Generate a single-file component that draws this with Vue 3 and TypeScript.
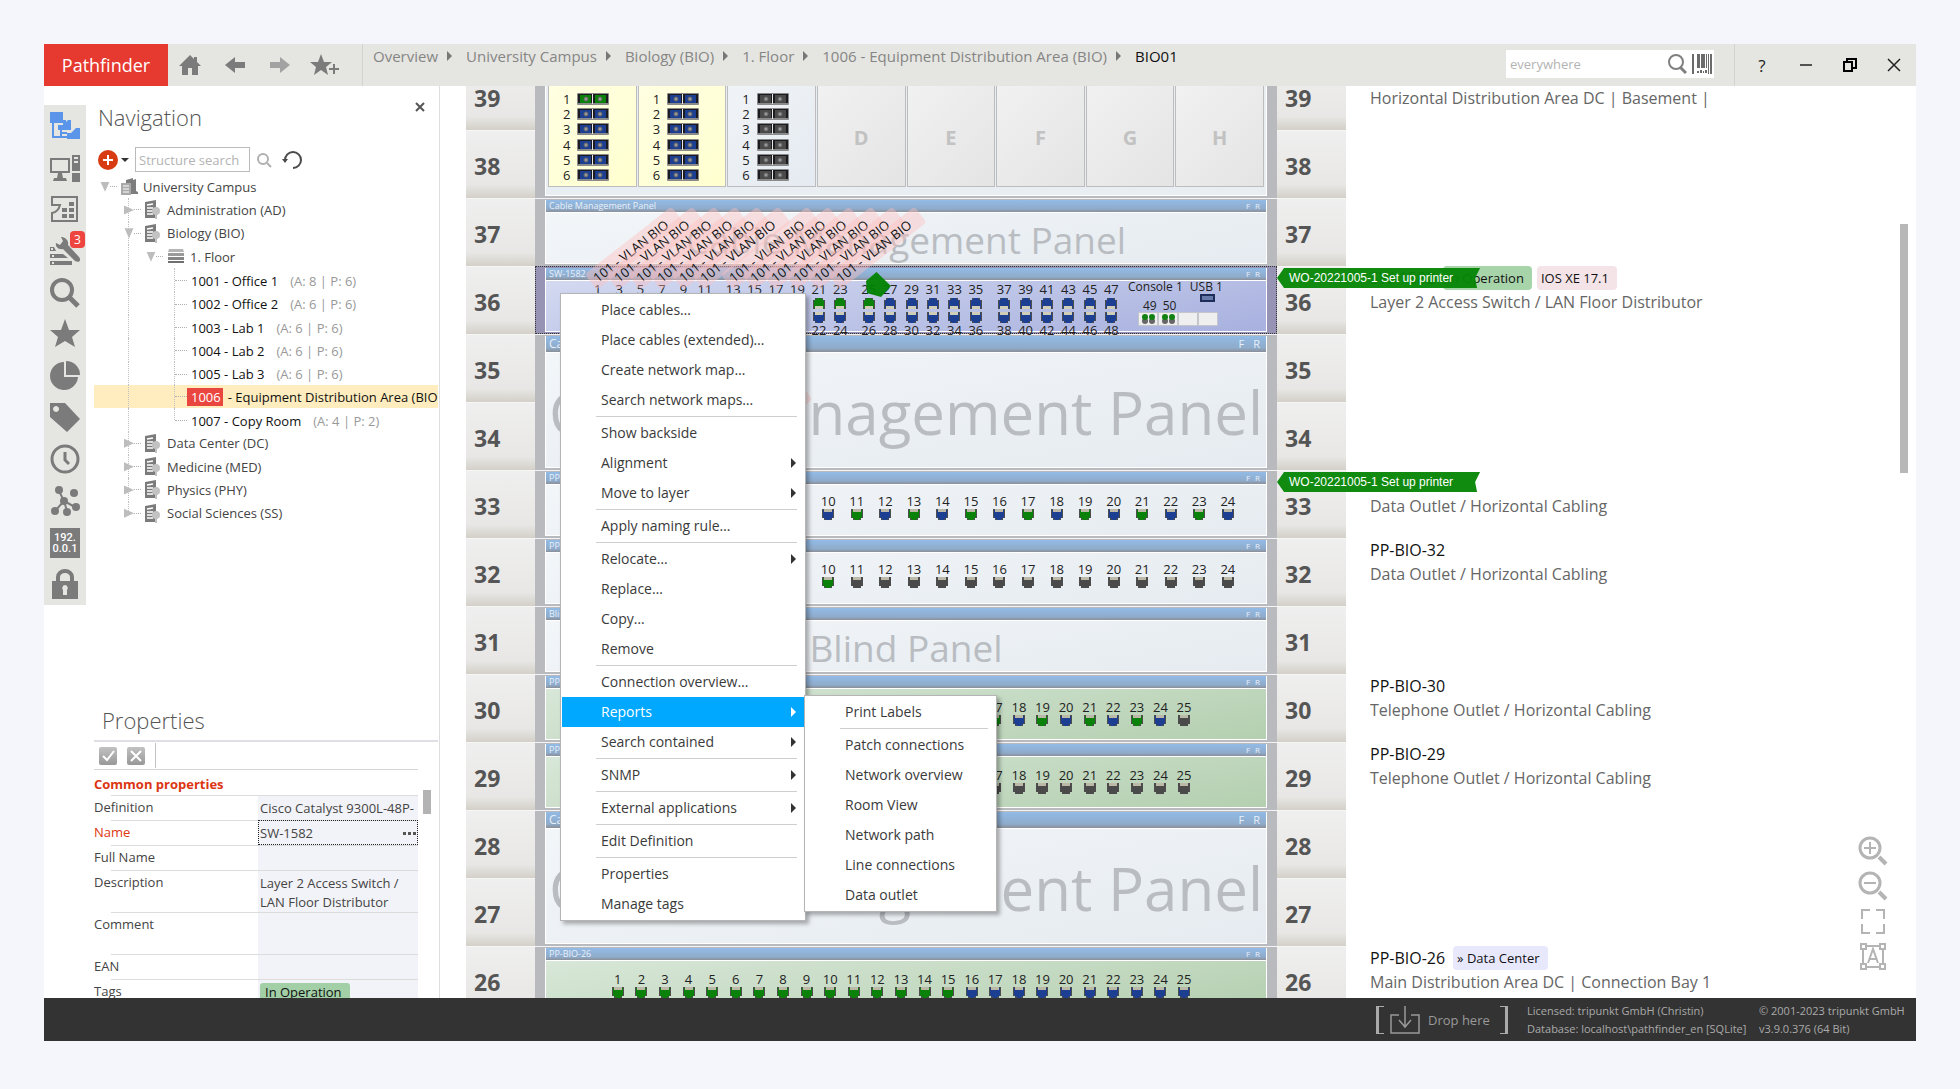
<script setup lang="ts">
interface TreeRow {
  label: string
  depth: number
  kind: 'campus' | 'building' | 'floor' | 'room'
  open?: boolean
  meta?: string
  code?: string
  last?: boolean
}
interface MenuEntry {
  label?: string
  sub?: boolean
  active?: boolean
  separator?: boolean
}
type Colour = 'green' | 'blue' | 'gray'
interface Port {
  n: number
  colour: Colour
}
interface Device {
  kind: 'blank' | 'switch' | 'patch' | 'phone'
  units: number
  title: string
  ports?: Port[]
}
interface UnitInfo {
  unit: number
  name?: string
  tags?: { text: string; tone: string }[]
  text?: string
  order?: string
}

const crumbs = ['Overview', 'University Campus', 'Biology (BIO)', '1. Floor', '1006 - Equipment Distribution Area (BIO)', 'BIO01']

const tree: TreeRow[] = [
  { label: 'University Campus', depth: 0, kind: 'campus', open: true },
  { label: 'Administration (AD)', depth: 1, kind: 'building' },
  { label: 'Biology (BIO)', depth: 1, kind: 'building', open: true },
  { label: '1. Floor', depth: 2, kind: 'floor', open: true },
  { label: '1001 - Office 1', depth: 3, kind: 'room', meta: '(A: 8 | P: 6)' },
  { label: '1002 - Office 2', depth: 3, kind: 'room', meta: '(A: 6 | P: 6)' },
  { label: '1003 - Lab 1', depth: 3, kind: 'room', meta: '(A: 6 | P: 6)' },
  { label: '1004 - Lab 2', depth: 3, kind: 'room', meta: '(A: 6 | P: 6)' },
  { label: '1005 - Lab 3', depth: 3, kind: 'room', meta: '(A: 6 | P: 6)' },
  { label: '- Equipment Distribution Area (BIO)', depth: 3, kind: 'room', code: '1006' },
  { label: '1007 - Copy Room', depth: 3, kind: 'room', meta: '(A: 4 | P: 2)', last: true },
  { label: 'Data Center (DC)', depth: 1, kind: 'building' },
  { label: 'Medicine (MED)', depth: 1, kind: 'building' },
  { label: 'Physics (PHY)', depth: 1, kind: 'building' },
  { label: 'Social Sciences (SS)', depth: 1, kind: 'building', last: true },
]

const sep: MenuEntry = { separator: true }
const menu: MenuEntry[] = [
  { label: 'Place cables…' },
  { label: 'Place cables (extended)…' },
  { label: 'Create network map…' },
  { label: 'Search network maps…' },
  sep,
  { label: 'Show backside' },
  { label: 'Alignment', sub: true },
  { label: 'Move to layer', sub: true },
  sep,
  { label: 'Apply naming rule…' },
  sep,
  { label: 'Relocate…', sub: true },
  { label: 'Replace…' },
  { label: 'Copy…' },
  { label: 'Remove' },
  sep,
  { label: 'Connection overview…' },
  { label: 'Reports', sub: true, active: true },
  { label: 'Search contained', sub: true },
  sep,
  { label: 'SNMP', sub: true },
  sep,
  { label: 'External applications', sub: true },
  sep,
  { label: 'Edit Definition' },
  sep,
  { label: 'Properties' },
  { label: 'Manage tags' },
]
const reports: MenuEntry[] = [
  { label: 'Print Labels' },
  sep,
  { label: 'Patch connections' },
  { label: 'Network overview' },
  { label: 'Room View' },
  { label: 'Network path' },
  { label: 'Line connections' },
  { label: 'Data outlet' },
]

const range = (count: number, colour: (n: number) => Colour): Port[] =>
  Array.from({ length: count }, (_, i) => ({ n: i + 1, colour: colour(i + 1) }))

const devices: Device[] = [
  { kind: 'blank', units: 1, title: 'Cable Management Panel' },
  { kind: 'switch', units: 1, title: 'SW-1582' },
  { kind: 'blank', units: 2, title: 'Cable Management Panel' },
  { kind: 'patch', units: 1, title: 'PP-BIO-33', ports: range(24, n => (n % 2 ? 'green' : 'blue')) },
  { kind: 'patch', units: 1, title: 'PP-BIO-32', ports: range(24, n => (n <= 10 ? 'green' : 'gray')) },
  { kind: 'blank', units: 1, title: 'Blind Panel' },
  { kind: 'phone', units: 1, title: 'PP-BIO-30', ports: range(25, n => (n === 25 ? 'gray' : n % 2 ? 'green' : 'blue')) },
  { kind: 'phone', units: 1, title: 'PP-BIO-29', ports: range(25, () => 'gray') },
  { kind: 'blank', units: 2, title: 'Cable Management Panel' },
  { kind: 'phone', units: 1, title: 'PP-BIO-26', ports: range(25, n => (n <= 15 ? 'green' : 'blue')) },
]

const switchGroups = [0, 1, 2, 3].map(g => [0, 1, 2, 3, 4, 5].map(i => g * 12 + i * 2 + 1))

const bays: { letter: string; colour?: Colour; tone: string }[] = [
  { letter: 'A', colour: 'blue', tone: 'yellow' },
  { letter: 'B', colour: 'blue', tone: 'yellow' },
  { letter: 'C', colour: 'gray', tone: 'pale' },
  { letter: 'D', tone: 'empty' },
  { letter: 'E', tone: 'empty' },
  { letter: 'F', tone: 'empty' },
  { letter: 'G', tone: 'empty' },
  { letter: 'H', tone: 'empty' },
]

const units: UnitInfo[] = [
  { unit: 39, text: 'Horizontal Distribution Area DC | Basement |' },
  { unit: 38 },
  { unit: 37 },
  {
    unit: 36,
    name: 'SW-1582',
    tags: [{ text: 'In Operation', tone: 'green' }, { text: 'IOS XE 17.1', tone: 'pink' }],
    text: 'Layer 2 Access Switch / LAN Floor Distributor',
    order: 'WO-20221005-1 Set up printer',
  },
  { unit: 35 },
  { unit: 34 },
  { unit: 33, text: 'Data Outlet / Horizontal Cabling', order: 'WO-20221005-1 Set up printer' },
  { unit: 32, name: 'PP-BIO-32', text: 'Data Outlet / Horizontal Cabling' },
  { unit: 31 },
  { unit: 30, name: 'PP-BIO-30', text: 'Telephone Outlet / Horizontal Cabling' },
  { unit: 29, name: 'PP-BIO-29', text: 'Telephone Outlet / Horizontal Cabling' },
  { unit: 28 },
  { unit: 27 },
  { unit: 26, name: 'PP-BIO-26', tags: [{ text: '» Data Center', tone: 'lilac' }], text: 'Main Distribution Area DC | Connection Bay 1' },
]
</script>

<template>
  <div class="desktop">
    <div class="window">
      <header class="topbar">
        <div class="brand">Pathfinder</div>
        <div class="tools">
          <button aria-label="Home"><svg width="22" height="22" viewBox="0 0 22 22"><path d="M11 1 0 12h3v9h6v-7h4v7h6v-9h3l-4-4V3h-3v2z" fill="#7b7b7b" /></svg></button>
          <button aria-label="Back"><svg width="22" height="22" viewBox="0 0 22 22"><path d="M1 11 11 3v5h10v6H11v5z" fill="#7b7b7b" /></svg></button>
          <button aria-label="Forward"><svg width="22" height="22" viewBox="0 0 22 22"><path d="M21 11 11 3v5H1v6h10v5z" fill="#a2a2a2" /></svg></button>
          <button aria-label="Add to favourites"><svg width="30" height="22" viewBox="0 0 30 22"><path d="m11 0 3 8h8l-6 5 2 8-7-5-7 5 2-8-6-5h8z" fill="#7b7b7b" /><path d="M24 10v10M19 15h10" stroke="#7b7b7b" stroke-width="2" /></svg></button>
        </div>
        <nav class="crumbs" aria-label="Breadcrumb">
          <template v-for="(c, i) in crumbs" :key="c">
            <i v-if="i" class="crumb-arrow"></i>
            <a href="#" :class="{ current: i === crumbs.length - 1 }">{{ c }}</a>
          </template>
        </nav>
        <div class="finder">
          <input type="text" placeholder="everywhere" aria-label="Search everywhere" />
          <svg width="19" height="20" viewBox="0 0 19 20"><circle cx="8" cy="8" r="7" fill="none" stroke="#808080" stroke-width="2" /><path d="m12 13 6 6" stroke="#808080" stroke-width="3" /></svg>
          <svg width="20" height="20" viewBox="0 0 20 20" fill="#6b6b6b"><path d="M0 0h2v20H0zM5 0h3v14H5zM9 0h4v14H9zM14 0h1v14h-1zM16 0h1v20h-1zM18 0h2v20h-2zM5 17h2v2H5zM8 16h2v3H8zM11 17h1v2h-1zM13 16h2v3h-2z" /></svg>
        </div>
        <div class="winctl">
          <button aria-label="Help"><span class="qm">?</span></button>
          <button aria-label="Minimize"><svg width="14" height="14"><path d="M1 7h12" stroke="#222" stroke-width="1.500" /></svg></button>
          <button aria-label="Restore"><svg width="14" height="14" fill="none" stroke="#000" stroke-width="2"><path d="M1 4h8v9H1zM4 4V1h9v9H9" /></svg></button>
          <button aria-label="Close"><svg width="14" height="14"><path d="m1 1 12 12M13 1 1 13" stroke="#222" stroke-width="1.500" /></svg></button>
        </div>
      </header>

      <div class="body">
        <aside class="side">
          <div class="rail">
            <button aria-label="Structure"><svg width="30" height="30" viewBox="0 0 30 30"><path d="M0 1h13v11H0zM13 9h3v3l-3 3zM8 14h5l5-5h3v10H8zM17 22h4l5-5h4v11H17z" fill="#5b95ea" /><path d="M3 12v14h14M11 18v8M11 22h6" fill="none" stroke="#5b95ea" stroke-width="2" /></svg></button>
            <button aria-label="Devices"><svg width="30" height="30" viewBox="0 0 30 30" fill="#7b7b7b"><path d="M0 5h20v15H0zm2 2v11h16V7zM8 20h4l1 5h3l1 3H3l1-3h3zM22 2h8v16h-8zm2 2v2h4V4zm0 4v2h4V8zM22 20h8v9h-8z" fill-rule="evenodd" /></svg></button>
            <button aria-label="Floor plan"><svg width="30" height="30" viewBox="0 0 30 30"><path d="M2 10V3h25v24H2v-8c5-1 7-4 8-8H1" fill="none" stroke="#7b7b7b" stroke-width="2" /><path d="M19 8h5v4h-5zM12 14h5v4h-5zM19 14h5v4h-5zM12 20h5v4h-5zM19 20h5v4h-5z" fill="#7b7b7b" /></svg></button>
            <button aria-label="Work orders"><svg width="30" height="30" viewBox="0 0 30 30" fill="#7b7b7b"><path d="M11 1c4 0 8 3 7 8l11 12c3 4-1 6-4 4L13 13c-4 1-8-2-7-6l4 2 3-4z" /><path d="M0 11h4l2 4H0zm1 1v2h2v-2zM0 18h13l5 4H0zm2 1v2h2v-2zM0 25h22v4H0zm2 1v2h2v-2z" fill-rule="evenodd" /></svg><span class="badge">3</span></button>
            <button aria-label="Search"><svg width="30" height="30" viewBox="0 0 30 30" fill="none" stroke="#7b7b7b"><circle cx="12" cy="12" r="10" stroke-width="4" /><path d="m19 19 9 9" stroke-width="5" /></svg></button>
            <button aria-label="Favourites"><svg width="30" height="30" viewBox="0 0 30 30"><path d="m15 0 4 11h11l-8 7 3 10-10-6-10 6 3-10-8-7h11z" fill="#7b7b7b" /></svg></button>
            <button aria-label="Charts"><svg width="30" height="30" viewBox="0 0 30 30" fill="#7b7b7b"><path d="M14 1A14 14 0 1 0 28 16H14z" /><path d="M16 0v14h14A14 14 0 0 0 16 0z" /></svg></button>
            <button aria-label="Tags"><svg width="30" height="30" viewBox="0 0 30 30"><path d="M0 0h15l15 16-13 13L0 14zm6 3a3 3 0 1 0 .1 0z" fill="#7b7b7b" fill-rule="evenodd" /></svg></button>
            <button aria-label="History"><svg width="30" height="30" viewBox="0 0 30 30" fill="none" stroke="#7b7b7b" stroke-width="3"><circle cx="15" cy="15" r="13" /><path d="M15 8v8l4 4" /></svg></button>
            <button aria-label="Network"><svg width="30" height="30" viewBox="0 0 30 30"><path d="M9 5l5 10L5 25M14 15l3 10M14 15l11 6" fill="none" stroke="#7b7b7b" stroke-width="2" /><g fill="#7b7b7b"><circle cx="9" cy="4" r="4" /><circle cx="24" cy="7" r="4" /><circle cx="14" cy="15" r="4" /><circle cx="5" cy="25" r="4" /><circle cx="17" cy="26" r="4" /><circle cx="26" cy="21" r="4" /></g></svg></button>
            <button aria-label="IP addresses"><span class="ip">192.<br />0.0.1</span></button>
            <button aria-label="Security"><svg width="30" height="30" viewBox="0 0 30 30"><path d="M8 13V8a7 6 0 0 1 14 0v5" fill="none" stroke="#7b7b7b" stroke-width="4" /><path d="M2 12h26v18H2zm13 4a3 3 0 0 0-2 5v5h4v-5a3 3 0 0 0-2-5z" fill="#7b7b7b" fill-rule="evenodd" /></svg></button>
          </div>

          <div class="panels">
            <section class="navigation">
              <div class="nav-head">
                <h2>Navigation</h2>
                <button aria-label="Close panel"><svg width="10" height="10"><path d="m1 1 8 8M9 1 1 9" stroke="#555" stroke-width="2" /></svg></button>
              </div>
              <div class="nav-search">
                <button aria-label="Add"><svg width="20" height="20"><circle cx="10" cy="10" r="10" fill="#d83b12" /><path d="M10 5v10M5 10h10" stroke="#fff" stroke-width="2" /></svg></button>
                <i class="caret"></i>
                <input type="text" placeholder="Structure search" aria-label="Structure search" />
                <button aria-label="Find"><svg width="16" height="16" fill="none" stroke="#b0b0b0"><circle cx="7" cy="7" r="5" stroke-width="2" /><path d="m11 11 4 4" stroke-width="2" /></svg></button>
                <button aria-label="Refresh" class="refresh"><svg width="20" height="20" fill="none"><path d="M3 10a8 8 0 1 1 8 8" stroke="#4a4a4a" stroke-width="2" /><path d="M0 9h6l-3 4z" fill="#4a4a4a" /></svg></button>
              </div>
              <ul class="tree">
                <li v-for="r in tree" :key="r.label" :class="['d' + r.depth, { picked: r.code, last: r.last }]">
                  <i v-if="r.kind !== 'room'" :class="['twisty', { open: r.open }]"></i>
                  <i class="dots"></i>
                  <svg v-if="r.kind === 'campus'" class="ico" width="17" height="19" viewBox="0 0 17 19"><path d="M5 3l7-2v2l3-1v12l2 1v2H9V6H5z" fill="#7d7d7d" /><path d="M0 6h10v12H0z" fill="#a9a9a9" /><path d="M2 9h6M2 12h6M2 15h6" stroke="#fff" /></svg>
                  <svg v-else-if="r.kind === 'building'" class="ico" width="16" height="19" viewBox="0 0 16 19"><path d="M0 2l11-2v18H0z" fill="#7b7b7b" /><path d="M2 5l6-1M2 8h6M2 11h6M2 14h6" stroke="#fff" stroke-width="1.500" /><path d="M11 14v5" stroke="#c2c2c2" stroke-width="2" /><circle cx="11" cy="11" r="4" fill="#c2c2c2" /></svg>
                  <svg v-else-if="r.kind === 'floor'" class="ico" width="18" height="15" viewBox="0 0 18 15"><path d="M2 0h14l1 3H1z" fill="#b5b5b5" /><path d="M1 4h16v3H1z" fill="#9a9a9a" /><path d="M1 8h16v3H1z" fill="#868686" /><path d="M1 12h16v2H1z" fill="#6e6e6e" /></svg>
                  <span v-if="r.code" class="code">{{ r.code }}</span>
                  <span class="name">{{ r.label }}</span>
                  <span v-if="r.meta" class="meta">{{ r.meta }}</span>
                </li>
              </ul>
            </section>

            <section class="properties">
              <h2>Properties</h2>
              <div class="prop-tools">
                <button aria-label="Apply"><svg width="18" height="18"><path d="m4 9 4 4 7-9" fill="none" stroke="#fff" stroke-width="2" /></svg></button>
                <button aria-label="Discard"><svg width="18" height="18"><path d="m4 4 10 10M14 4 4 14" stroke="#fff" stroke-width="2" /></svg></button>
                <i></i>
              </div>
              <div class="prop-scroll">
                <table>
                  <colgroup>
                    <col class="c-name" />
                    <col class="c-value" />
                  </colgroup>
                  <thead>
                    <tr><th colspan="2">Common properties</th></tr>
                  </thead>
                  <tbody>
                    <tr><th>Definition</th><td><span class="clip">Cisco Catalyst 9300L-48P-</span></td></tr>
                    <tr class="red"><th>Name</th><td class="focus"><div class="edit"><span>SW-1582</span><button aria-label="Edit name"><i></i><i></i><i></i></button></div></td></tr>
                    <tr><th>Full Name</th><td></td></tr>
                    <tr class="tall"><th>Description</th><td>Layer 2 Access Switch / LAN Floor Distributor</td></tr>
                    <tr class="tall"><th>Comment</th><td></td></tr>
                    <tr><th>EAN</th><td></td></tr>
                    <tr><th>Tags</th><td><span class="op">In Operation</span></td></tr>
                  </tbody>
                </table>
                <i class="thumb"></i>
              </div>
            </section>
          </div>
        </aside>

        <main class="stage">
          <ol class="numbers">
            <li v-for="u in units" :key="u.unit">{{ u.unit }}</li>
          </ol>

          <div class="rack">
            <div class="chassis">
              <div class="bays">
                <div v-for="b in bays" :key="b.letter" :class="['bay', b.tone]">
                  <ul v-if="b.colour">
                    <li v-for="n in 6" :key="n">
                      <span>{{ n }}</span>
                      <svg width="32" height="12" viewBox="0 0 32 12" :class="b.letter === 'A' && n === 1 ? 'green' : b.colour">
                        <rect width="32" height="12" rx="1" fill="#8a8a8a" /><path d="M1 1h30v9H1z" fill="#1c1c20" />
                        <rect class="fillc" x="3" y="2" width="11" height="8" /><rect class="fillc" x="18" y="2" width="11" height="8" /><path d="M15 1h1v10h-1z" fill="#e8e8e8" />
                        <circle cx="9" cy="6" r="2" fill="#999" stroke="#666" /><circle cx="23" cy="6" r="2" fill="#999" stroke="#666" />
                      </svg>
                    </li>
                  </ul>
                  <strong v-else>{{ b.letter }}</strong>
                </div>
              </div>
            </div>

            <div v-for="(d, di) in devices" :key="di" :class="['device', d.kind, 'u' + d.units]">
              <div class="panel">
                <div class="cap"><span>{{ d.title }}</span><span class="fr"><b>F</b><b>R</b></span></div>
                <div v-if="d.kind === 'blank'" class="face mark">{{ d.title }}</div>
                <div v-else-if="d.ports" class="face ports">
                  <div v-for="p in d.ports" :key="p.n" class="port">
                    <span>{{ p.n }}</span>
                    <svg width="14" height="12" viewBox="0 0 14 12" :class="p.colour"><path d="M1 0h12v9h-2v2H3V9H1z" fill="#4d4d4d" /><path class="fillc" d="M2 1h10v7l-2 2H9v1H5v-1H4L2 8z" /><path d="M3 0h8v3H3z" fill="#bdb9a8" /></svg>
                  </div>
                </div>
                <div v-else class="face switch-face">
                  <div class="groups">
                    <div v-for="(g, gi) in switchGroups" :key="gi" class="group">
                      <div v-for="n in g" :key="n" class="pair">
                        <em v-if="n < 24" class="vlan">101 - VLAN BIO</em>
                        <em v-if="n === 11" class="vlan low">101 - VLAN BIO</em>
                        <i v-if="n === 25" class="pin"></i>
                        <span>{{ n }}</span>
                        <svg width="14" height="12" viewBox="0 0 14 12" :class="n < 26 ? 'green' : 'blue'"><path d="M1 12h12V3h-2V1H3v2H1z" fill="#4d4d4d" /><path class="fillc" d="M2 11h10V4l-2-2H9V1H5v1H4L2 4z" /><path d="M3 9h8v3H3z" fill="#d0cdb8" /></svg>
                        <svg width="14" height="12" viewBox="0 0 14 12" class="blue second"><path d="M1 0h12v9h-2v2H3V9H1z" fill="#4d4d4d" /><path class="fillc" d="M2 1h10v7l-2 2H9v1H5v-1H4L2 8z" /><path d="M3 0h8v3H3z" fill="#d0cdb8" /></svg>
                        <span>{{ n + 1 }}</span>
                      </div>
                    </div>
                  </div>
                  <div class="extras">
                    <div class="ex-labels"><span>Console 1</span><span>USB 1</span></div>
                    <div class="ex-mid"><span>49</span><span>50</span><i class="usb"></i></div>
                    <div class="slots">
                      <i v-for="s in 4" :key="s"><svg v-if="s < 3" width="13" height="10"><g fill="#666"><circle cx="3" cy="7" r="3" /><circle cx="10" cy="7" r="3" /></g><g fill="#128012"><circle cx="3" cy="3" r="3" /><circle cx="10" cy="3" r="3" /></g></svg></i>
                    </div>
                  </div>
                </div>
              </div>
            </div>
          </div>

          <ol class="numbers right">
            <li v-for="u in units" :key="u.unit">{{ u.unit }}</li>
          </ol>

          <ul class="info">
            <li v-for="u in units" :key="u.unit">
              <div class="title"><span v-if="u.name">{{ u.name }}</span><span v-for="t in u.tags" :key="t.text" :class="['tag', t.tone]">{{ t.text }}</span></div>
              <div class="text">{{ u.text }}</div>
              <div v-if="u.order" class="order">{{ u.order }}</div>
            </li>
          </ul>

          <i class="scrollbar"></i>

          <div class="zoomers">
            <button aria-label="Zoom in"><svg width="30" height="30" fill="none" stroke="#b4b4b4"><circle cx="12" cy="12" r="10" stroke-width="3" /><path d="M12 6v12M6 12h12" stroke-width="2" /><path d="m21 21 7 7" stroke-width="4" /></svg></button>
            <button aria-label="Zoom out"><svg width="30" height="30" fill="none" stroke="#b4b4b4"><circle cx="12" cy="12" r="10" stroke-width="3" /><path d="M6 12h12" stroke-width="2" /><path d="m21 21 7 7" stroke-width="4" /></svg></button>
            <button aria-label="Fit to window"><svg width="30" height="30" fill="none" stroke="#b4b4b4" stroke-width="2"><path d="M4 13V4h8M18 4h8v9M26 18v9h-8M12 27H4v-9" /></svg></button>
            <button aria-label="Automatic labels"><svg width="30" height="30" fill="none" stroke="#b4b4b4" stroke-width="2"><path d="M3 3h5v5H3zM22 3h5v5h-5zM3 23h5v5H3zM22 23h5v5h-5zM8 5h14M8 26h14M5 8v15M25 8v15M10 22l5-14 5 14M12 18h6" /></svg></button>
          </div>

          <div class="menu main-menu" role="menu">
            <template v-for="(m, i) in menu" :key="i">
              <hr v-if="m.separator" />
              <button v-else role="menuitem" :class="{ active: m.active }"><span>{{ m.label }}</span><i v-if="m.sub"></i></button>
            </template>
          </div>
          <div class="menu sub-menu" role="menu">
            <template v-for="(m, i) in reports" :key="i">
              <hr v-if="m.separator" />
              <button v-else role="menuitem"><span>{{ m.label }}</span></button>
            </template>
          </div>
        </main>
      </div>

      <footer class="status">
        <div class="drop">
          <svg width="30" height="30" fill="none" stroke="#999"><path d="M9 10H1v18h28V10h-8" stroke-width="1.500" /><path d="M15 1v20M9 15l6 7 6-7" stroke-width="1.500" /></svg>
          <span>Drop here</span>
        </div>
        <div class="lic"><span>Licensed: tripunkt GmbH (Christin)</span><span>Database: localhost\pathfinder_en [SQLite]</span></div>
        <div class="lic ver"><span>© 2001-2023 tripunkt GmbH</span><span>v3.9.0.376 (64 Bit)</span></div>
      </footer>
    </div>
  </div>
</template>

<style>
body {
  margin: 0;
  background: #f4f6fb;
}
</style>

<style scoped>
* {
  box-sizing: border-box;
}
.desktop {
  height: 100vh;
  padding: 44px 44px 48px;
  background: #f4f6fb;
  font-family: "Open Sans", "Noto Sans", sans-serif;
  font-size: 13px;
  color: #444;
}
button {
  border: 0;
  padding: 0;
  background: none;
  font: inherit;
  color: inherit;
}
ul,
ol {
  list-style: none;
  margin: 0;
  padding: 0;
}
svg {
  display: block;
  flex: none;
}
.window {
  height: 100%;
  display: flex;
  flex-direction: column;
  background: #fff;
  overflow: hidden;
}
.green .fillc { fill: #0a820a; }
.blue .fillc { fill: #1c3f92; }
.gray .fillc { fill: #4a4a4a; }

/* top bar */
.topbar {
  flex: none;
  height: 42px;
  display: flex;
  background: #e5e6e1;
}
.brand {
  width: 124px;
  background: #e6392f;
  color: #fff;
  font-size: 18px;
  line-height: 43px;
  text-align: center;
}
.tools {
  width: 195px;
  display: flex;
  align-items: center;
  gap: 1px;
  border-right: 1px solid #d3d4cf;
}
.tools button {
  width: 44px;
  display: flex;
  justify-content: center;
}
.crumbs {
  flex: 1;
  display: flex;
  align-items: center;
  height: 23px;
  padding-left: 10px;
  font-size: 15px;
  white-space: nowrap;
}
.crumbs a {
  color: #858585;
  text-decoration: none;
}
.crumbs a.current {
  color: #111;
}
.crumb-arrow {
  margin: 0 14px 0 9px;
  border-left: 5px solid #777;
  border-top: 5px solid transparent;
  border-bottom: 5px solid transparent;
}
.finder {
  display: flex;
  align-items: center;
  gap: 5px;
  width: 208px;
  height: 28px;
  margin-top: 6px;
  padding: 0 2px 0 4px;
  background: #fff;
}
.finder input {
  flex: 1;
  min-width: 0;
  border: 0;
  padding: 0;
  outline: 0;
  font: inherit;
  background: none;
}
input::placeholder {
  color: #b3b3b3;
}
.winctl {
  display: flex;
  align-items: center;
  margin-left: 20px;
  padding-left: 5px;
  border-left: 1px solid #d3d4cf;
}
.winctl button {
  width: 44px;
  display: flex;
  justify-content: center;
}
.qm {
  font-size: 17px;
  color: #222;
}

/* left side */
.body {
  flex: 1;
  min-height: 0;
  display: flex;
}
.side {
  width: 395px;
  flex: none;
  display: flex;
}
.rail {
  width: 42px;
  height: 500px;
  margin-top: 19px;
  display: flex;
  flex-direction: column;
  background: #e5e6e1;
}
.rail button {
  flex: 1;
  display: flex;
  align-items: center;
  justify-content: center;
  position: relative;
}
.badge {
  position: absolute;
  right: 1px;
  top: 1px;
  width: 15px;
  height: 17px;
  border-radius: 4px;
  background: #ee4540;
  color: #fff;
  font-size: 12px;
  line-height: 17px;
}
.ip {
  width: 30px;
  height: 30px;
  padding-top: 4px;
  background: #7b7b7b;
  color: #fff;
  font: 500 11px/11px Roboto, sans-serif;
  text-align: center;
}
.panels {
  flex: 1;
  min-width: 0;
  display: flex;
  flex-direction: column;
  padding-left: 8px;
}
h2 {
  margin: 0;
  font-size: 22px;
  font-weight: 300;
  line-height: 30px;
  color: #555;
}
.nav-head {
  display: flex;
  justify-content: space-between;
  align-items: flex-start;
  padding: 16px 14px 0 4px;
}
.nav-search {
  display: flex;
  align-items: center;
  margin-top: 15px;
  padding-left: 4px;
}
.caret {
  margin: 0 6px 0 3px;
  border-top: 4px solid #333;
  border-left: 4px solid transparent;
  border-right: 4px solid transparent;
}
.nav-search input {
  width: 115px;
  height: 25px;
  margin-right: 6px;
  padding: 0 3px;
  border: 1px solid #bbb;
  font: inherit;
}
.refresh {
  margin-left: 10px;
}
.tree {
  height: 350px;
  margin-top: 3px;
  margin-right: 1px;
  display: grid;
  grid-auto-rows: 1fr;
}
.tree li {
  position: relative;
  display: flex;
  align-items: center;
  min-width: 0;
  white-space: nowrap;
  overflow: hidden;
}
.tree .d0 { padding-left: 6px; }
.tree .d1 { padding-left: 30px; }
.tree .d2 { padding-left: 52px; }
.tree .d3 { padding: 2px 0 0 81px; color: #111; }
.tree li:not(.d0)::before {
  content: "";
  position: absolute;
  left: 34px;
  top: 0;
  bottom: 0;
  border-left: 1px dotted #c0c0c0;
}
.tree li.d3::after {
  content: "";
  position: absolute;
  left: 80px;
  top: 0;
  bottom: 0;
  border-left: 1px dotted #c0c0c0;
}
.tree li.last.d1::before,
.tree li.last.d3::after {
  bottom: 50%;
}
.twisty {
  width: 10px;
  height: 10px;
  flex: none;
  background: #bdbdbd;
  clip-path: polygon(0 5%, 100% 50%, 0 95%);
}
.twisty.open {
  clip-path: polygon(5% 0, 95% 0, 50% 100%);
}
.dots {
  width: 7px;
  flex: none;
  margin-right: 4px;
  border-top: 1px dotted #b0b0b0;
}
.d3 .dots {
  width: 12px;
  margin-right: 4px;
}
.ico {
  margin-right: 5px;
}
.d1 .ico {
  margin-right: 6px;
}
.meta {
  margin-left: 12px;
  color: #999;
}
.tree .picked {
  padding-top: 0;
  background: #ffedbf;
}
.code {
  margin: 0 5px 0 -4px;
  padding: 0 2px 0 4px;
  background: #ea4640;
  color: #fff;
  line-height: 18px;
}
.properties {
  flex: 1;
  min-height: 0;
  padding-top: 180px;
  display: flex;
  flex-direction: column;
}
.properties h2 {
  padding: 0 0 5px 8px;
  margin-right: 1px;
  border-bottom: 2px solid #dfdfe6;
}
.prop-tools {
  display: flex;
  align-items: center;
  gap: 10px;
  height: 28px;
  margin-right: 21px;
  padding-left: 5px;
  border-bottom: 1px solid #d5d5d5;
}
.prop-tools button {
  border-radius: 2px;
  background: linear-gradient(#c2c2c2, #989898);
}
.prop-tools i {
  height: 25px;
  border-left: 1px solid #c4c4c4;
}
.prop-scroll {
  flex: 1;
  min-height: 0;
  display: flex;
  gap: 5px;
  overflow: hidden;
}
.thumb {
  width: 8px;
  height: 24px;
  margin-top: 20px;
  background: #b3b3b3;
}
table {
  width: 324px;
  height: 0;
  border-collapse: separate;
  border-spacing: 0;
  table-layout: fixed;
}
.c-name {
  width: 164px;
}
.c-value {
  width: 160px;
}
th,
td {
  height: 25px;
  padding: 3px 2px 0;
  text-align: left;
  vertical-align: top;
  font-weight: 400;
  line-height: 19px;
  white-space: nowrap;
  background: linear-gradient(#dcdcdc, #dcdcdc) 17px 0 / 100% 1px no-repeat;
}
th {
  padding-left: 0;
}
thead th {
  padding: 5px 0 0;
  background: none;
  color: #dc3512;
  font-weight: 700;
}
td {
  white-space: normal;
  background: #f2f3f8;
  border-top: 1px solid #dcdcdc;
}
.tall th,
.tall td {
  height: 42px;
}
.clip {
  display: block;
  white-space: nowrap;
  overflow: hidden;
}
.red th {
  color: #dc3512;
}
.focus {
  outline: 1px dotted #222;
  outline-offset: -1px;
}
.edit {
  display: flex;
  justify-content: space-between;
}
.edit button {
  display: flex;
  align-items: center;
  gap: 2px;
}
.edit i {
  width: 3px;
  height: 3px;
  background: #555;
}
.op {
  display: inline-block;
  padding: 0 8px 0 5px;
  border-radius: 3px;
  background: #a2cfa6;
  color: #111;
}

/* rack */
.stage {
  flex: 1;
  min-width: 0;
  position: relative;
  display: grid;
  grid-template-columns: 69px minmax(0, 742fr) 69px minmax(0, 570fr);
  align-items: start;
  padding-left: 26px;
  border-left: 1px solid #dedede;
  overflow: hidden;
}
.numbers,
.info {
  margin-top: -24px;
}
.numbers li {
  height: 68px;
  padding: 2px 0 0 8px;
  font-size: 23px;
  font-weight: 700;
  line-height: 66px;
  color: #555;
  border-top: 1px solid #f6f6f6;
  background: linear-gradient(#efefef, #e8e7e5 80%, #d3d0c8);
}
.rack {
  background: #b9babe;
}
.chassis {
  height: 112px;
  padding: 0 10px 2px;
  display: flex;
}
.bays {
  flex: 1;
  display: grid;
  grid-template-columns: repeat(8, 1fr);
  gap: 1px;
  padding: 0 2px 8px;
  border: solid #fff;
  border-width: 0 1px 1px;
  background: #e9eef3;
}
.bay {
  display: flex;
  align-items: center;
  justify-content: center;
  padding-top: 2px;
  border: 1px solid #bdbdbf;
  border-top: 0;
}
.bay.yellow { background: linear-gradient(135deg, #ffffe2, #ffffcf); }
.bay.pale { background: linear-gradient(135deg, #f1f4f7, #e4eaf1); }
.bay.empty { background: linear-gradient(135deg, #f1f1f1, #e4e4e4); }
.bay strong {
  font-size: 20px;
  color: #c2c2c2;
}
.bay ul {
  flex: 1;
  align-self: stretch;
  padding: 3px 0 3px 14px;
  display: flex;
  flex-direction: column;
  justify-content: space-around;
}
.bay li {
  display: flex;
  align-items: center;
  height: 14px;
  gap: 7px;
  color: #222;
  line-height: 14px;
}
.device {
  height: 68px;
  display: flex;
  padding: 1px 10px 2px;
  border-top: 1px solid #f3f3f5;
}
.device.u2 {
  height: 136px;
}
.panel {
  flex: 1;
  min-width: 0;
  display: flex;
  flex-direction: column;
  border: 1px solid #fff;
  border-top: 0;
}
.cap {
  flex: none;
  display: flex;
  justify-content: space-between;
  height: 12px;
  padding: 0 6px 0 3px;
  background: linear-gradient(#92bbe6, #8fabca 75%, #8a8f98);
  color: #e9f0f8;
  font-size: 9px;
  line-height: 11px;
}
.fr b {
  margin-left: 5px;
  font-weight: 400;
  font-size: 8px;
}
.u2 .cap {
  height: 16px;
  font-size: 12px;
  line-height: 16px;
}
.u2 .fr b {
  margin-left: 9px;
  font-size: 11px;
}
.face {
  flex: 1;
  min-height: 0;
  border-top: 1px solid #fff;
  background: linear-gradient(170deg, #f3f6f9, #e5ebf0);
}
.mark {
  display: flex;
  align-items: center;
  justify-content: center;
  padding-top: 4px;
  overflow: hidden;
  font-size: 37px;
  line-height: 48px;
  color: #b9bdc2;
  white-space: nowrap;
}
.u2 .mark {
  font-size: 60px;
  line-height: 80px;
}
.phone .face {
  background: linear-gradient(170deg, #d8e7d8, #b4cfb0);
}
.ports {
  display: flex;
  padding: 8px 24px 0 11px;
}
.phone .ports {
  padding: 10px 70px 0 60px;
}
.port,
.pair {
  flex: 1;
  min-width: 0;
  display: flex;
  flex-direction: column;
  align-items: center;
  color: #222;
  line-height: 16px;
}
.switch .face {
  display: flex;
  padding: 0 0 0 41px;
  background: linear-gradient(170deg, #d3d9f0, #a8b1df);
}
.switch {
  background: #9793b5;
  border-top: 1px dotted #222;
  outline: 1px dotted #333;
  outline-offset: -1px;
  position: relative;
}
.groups {
  flex: 535;
  display: flex;
  gap: 7px;
}
.group {
  flex: 1;
  display: flex;
}
.pair {
  position: relative;
}
.pair .second {
  margin-top: 3px;
}
.pair span:last-child {
  line-height: 12px;
}
.vlan {
  position: absolute;
  left: 10px;
  bottom: 100%;
  margin-bottom: -9px;
  height: 20px;
  padding: 0 14px 0 5px;
  border-radius: 4px;
  background: rgba(255, 190, 190, 0.42);
  color: #111;
  font-size: 13px;
  font-style: normal;
  line-height: 20px;
  white-space: nowrap;
  transform: rotate(-38deg);
  transform-origin: left bottom;
}
.vlan.low {
  left: 32px;
  bottom: -127px;
}
.pin {
  position: absolute;
  left: 8px;
  top: -9px;
  width: 25px;
  height: 25px;
  background: rgba(0, 130, 0, 0.95);
  clip-path: polygon(42% 0, 100% 56%, 60% 100%, 4% 84%, 0 36%);
  z-index: 1;
}
.extras {
  flex: 144;
  color: #222;
}
.ex-labels {
  display: flex;
  gap: 7px;
  padding-left: 6px;
  font-size: 12px;
  line-height: 12px;
  white-space: nowrap;
}
.ex-mid {
  display: flex;
  gap: 6px;
  height: 19px;
  padding-left: 21px;
  align-items: flex-end;
  font-size: 12px;
  line-height: 13px;
}
.usb {
  width: 15px;
  height: 8px;
  margin: 0 0 10px 18px;
  border: 2px solid #1d2c58;
  background: #6679a8;
}
.slots {
  display: flex;
  padding-left: 16px;
}
.slots i {
  width: 20px;
  height: 14px;
  padding: 1px 3px;
  border: 1px solid #c5c5cc;
  background: #efefef;
}

/* unit details */
.info {
  padding-left: 24px;
}
.info li {
  position: relative;
  height: 68px;
  font-size: 16px;
  white-space: nowrap;
}
.title {
  display: flex;
  align-items: center;
  gap: 5px;
  height: 23px;
  color: #111;
}
.title span + .tag:nth-child(2) {
  margin-left: 3px;
}
.text {
  line-height: 26px;
  color: #666;
}
.tag {
  height: 24px;
  padding: 0 8px 0 4px;
  border-radius: 4px;
  font-size: 13px;
  line-height: 24px;
}
.tag.green { background: #a8d4aa; color: #111; }
.tag.pink { background: #f4e4e8; }
.tag.lilac { background: #e8e8fd; }
.order {
  position: absolute;
  left: -93px;
  top: 2px;
  height: 20px;
  padding: 0 27px 0 12px;
  background: rgba(6, 134, 6, 0.96);
  color: #fff;
  font: 12px/20px "Liberation Sans", sans-serif;
  clip-path: polygon(0 50%, 7px 0, 100% 0, calc(100% - 5px) 50%, calc(100% - 3px) 100%, 7px 100%);
}
.scrollbar {
  position: absolute;
  right: 8px;
  top: 138px;
  width: 8px;
  height: 249px;
  background: #b8b8b8;
}
.zoomers {
  position: absolute;
  right: 28px;
  bottom: 27px;
  display: flex;
  flex-direction: column;
  gap: 5px;
}

/* context menus */
.menu {
  position: absolute;
  z-index: 3;
  display: flex;
  flex-direction: column;
  padding: 1px;
  border: 1px solid #b5b5b5;
  background: #fff;
  box-shadow: 3px 3px 4px rgba(0, 0, 0, 0.3);
  font-size: 14px;
}
.main-menu {
  left: 120px;
  top: 207px;
  width: 246px;
}
.sub-menu {
  left: 364px;
  top: 609px;
  width: 193px;
}
.menu button {
  height: 30px;
  padding: 0 8px 1px 39px;
  display: flex;
  align-items: center;
  justify-content: space-between;
  color: #3a3a3a;
}
.menu button i {
  border-left: 5px solid #333;
  border-top: 5px solid transparent;
  border-bottom: 5px solid transparent;
}
.menu .active {
  background: #00a8ff;
  color: #fff;
}
.menu .active i {
  border-left-color: #fff;
}
.menu hr {
  width: auto;
  height: 1px;
  margin: 1px 7px 1px 34px;
  border: 0;
  background: #cfcfcf;
}

/* status bar */
.status {
  flex: none;
  height: 43px;
  display: flex;
  align-items: center;
  justify-content: flex-end;
  padding-right: 15px;
  background: #333;
  color: #aaa;
}
.drop {
  position: relative;
  display: flex;
  align-items: center;
  gap: 8px;
  width: 132px;
  height: 28px;
  padding-left: 14px;
  color: #999;
  font-size: 13px;
}
.drop::before,
.drop::after {
  content: "";
  position: absolute;
  top: 0;
  bottom: 0;
  width: 5px;
  border: 1px solid #aaa;
}
.drop::before {
  left: 0;
  border-right: 0;
  border-left-width: 3px;
}
.drop::after {
  right: 0;
  border-left: 0;
  border-right-width: 3px;
}
.lic {
  width: 232px;
  margin-left: 19px;
  display: flex;
  flex-direction: column;
  font-size: 11px;
  line-height: 18px;
  white-space: nowrap;
}
.lic.ver {
  width: 142px;
  margin-left: 0;
}
</style>
